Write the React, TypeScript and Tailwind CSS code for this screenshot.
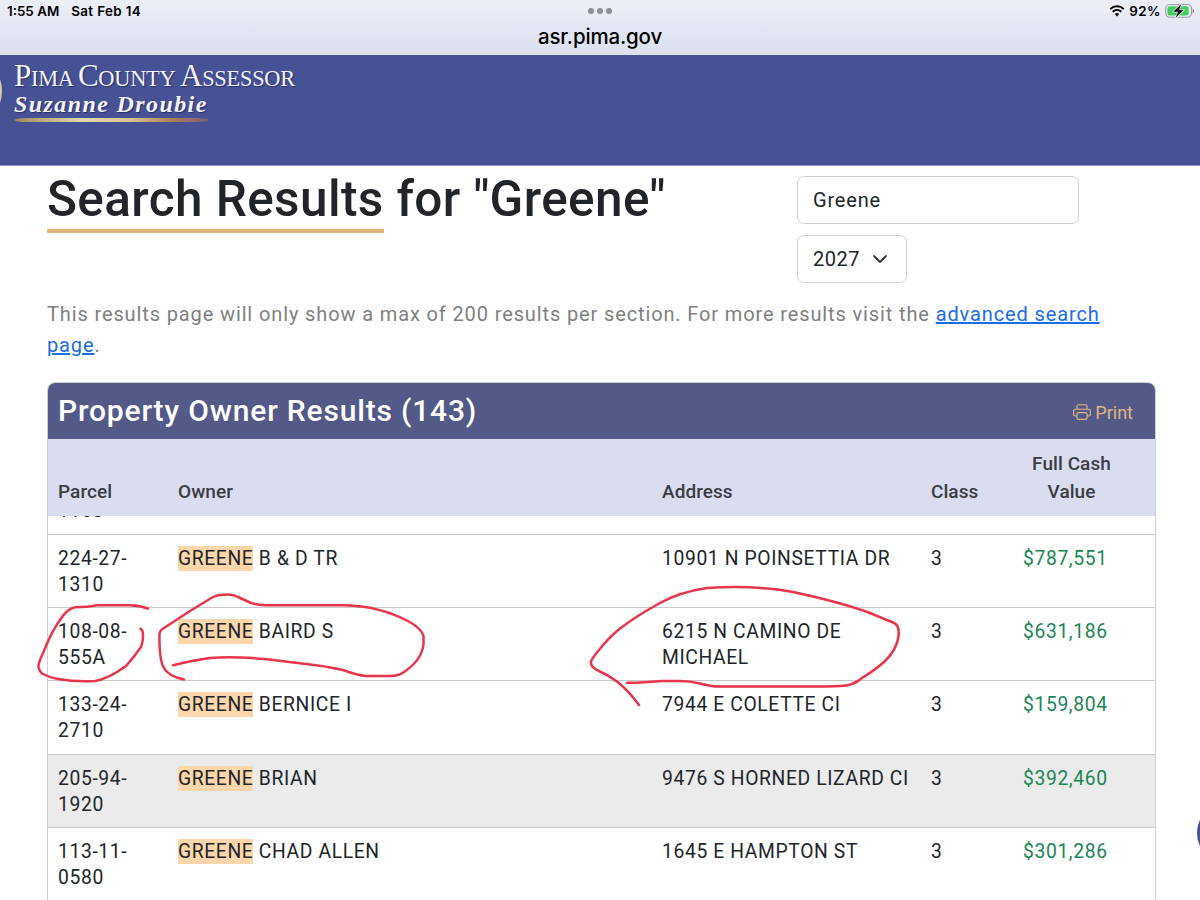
import { FC } from "react";

type OwnerRow = {
  parcel: [string, string];
  owner: string;
  address: string;
  classCode: string;
  value: string;
  shaded?: boolean;
};

const rows: OwnerRow[] = [
  {
    parcel: ["224-27-", "1310"],
    owner: "B & D TR",
    address: "10901 N POINSETTIA DR",
    classCode: "3",
    value: "$787,551",
  },
  {
    parcel: ["108-08-", "555A"],
    owner: "BAIRD S",
    address: "6215 N CAMINO DE MICHAEL",
    classCode: "3",
    value: "$631,186",
  },
  {
    parcel: ["133-24-", "2710"],
    owner: "BERNICE I",
    address: "7944 E COLETTE CI",
    classCode: "3",
    value: "$159,804",
  },
  {
    parcel: ["205-94-", "1920"],
    owner: "BRIAN",
    address: "9476 S HORNED LIZARD CI",
    classCode: "3",
    value: "$392,460",
    shaded: true,
  },
  {
    parcel: ["113-11-", "0580"],
    owner: "CHAD ALLEN",
    address: "1645 E HAMPTON ST",
    classCode: "3",
    value: "$301,286",
  },
];

const WifiIcon: FC = () => (
  <svg width="16" height="12" viewBox="0 0 16 12" fill="none" stroke="#000">
    <path d="M1.2 4.1a9.8 9.8 0 0 1 13.6 0" strokeWidth="2" />
    <path d="M3.7 6.8a6.2 6.2 0 0 1 8.6 0" strokeWidth="1.9" />
    <path d="M8 11.4 5.8 9.1a3.2 3.2 0 0 1 4.4 0z" fill="#000" stroke="none" />
  </svg>
);

const BatteryIcon: FC = () => (
  <svg width="30" height="16" viewBox="0 0 30 16" fill="none">
    <rect x="0.7" y="1.5" width="25.8" height="12.8" rx="4" stroke="#9b9da6" strokeWidth="1.1" />
    <rect x="2.4" y="3.2" width="21.2" height="9.400" rx="2.5" fill="#3fce5f" />
    <path d="M27.6 5.8v4.2c1-.3 1.6-1.1 1.6-2.1s-.6-1.8-1.6-2.1z" fill="#85878f" />
    <path
      d="M16.200 1 8.400 8.700h4.700L10.600 14.800l8.300-8h-4.800z"
      fill="#000"
      stroke="#e6e9f3"
      strokeWidth="1.6"
      paintOrder="stroke"
      strokeLinejoin="round"
    />
  </svg>
);

const PrinterIcon: FC = () => (
  <svg width="18" height="18" viewBox="0 0 16 16" fill="#e0b683">
    <path d="M5 1a2 2 0 0 0-2 2v2H2a2 2 0 0 0-2 2v3a2 2 0 0 0 2 2h1v1a2 2 0 0 0 2 2h6a2 2 0 0 0 2-2v-1h1a2 2 0 0 0 2-2V7a2 2 0 0 0-2-2h-1V3a2 2 0 0 0-2-2zM4 3a1 1 0 0 1 1-1h6a1 1 0 0 1 1 1v2H4zm1 5a2 2 0 0 0-2 2v1H2a1 1 0 0 1-1-1V7a1 1 0 0 1 1-1h12a1 1 0 0 1 1 1v3a1 1 0 0 1-1 1h-1v-1a2 2 0 0 0-2-2zm7 2v3a1 1 0 0 1-1 1H5a1 1 0 0 1-1-1v-3a1 1 0 0 1 1-1h6a1 1 0 0 1 1 1" />
  </svg>
);

// Status bar and address line
const BrowserBar: FC = () => (
  <div className="h-[55px] bg-linear-to-b from-[#eceef7] to-[#dce0ef] font-['Inter',sans-serif] text-black">
    <div className="grid h-[22px] grid-cols-3 items-center">
      <div className="flex gap-3 pl-[7px] text-[13.4px] leading-[22px] font-semibold whitespace-nowrap">
        <span>1:55 AM</span>
        <span className="tracking-[0.35px]">Sat Feb 14</span>
      </div>
      <div className="flex justify-center gap-[3px]">
        <span className="size-1.5 rounded-full bg-[#8b8d97]" />
        <span className="size-1.5 rounded-full bg-[#8b8d97]" />
        <span className="size-1.5 rounded-full bg-[#8b8d97]" />
      </div>
      <div className="flex items-center justify-end pr-[5px]">
        <WifiIcon />
        <span className="mr-1 ml-1 text-[13.4px] font-semibold tracking-[0.5px]">92%</span>
        <BatteryIcon />
      </div>
    </div>
    <div className="text-center text-[20.5px] leading-[30px] font-medium tracking-[-0.15px]">
      asr.pima.gov
    </div>
  </div>
);

const SiteHeader: FC = () => (
  <header className="relative h-[111px] overflow-hidden border-b border-[#8f94cf] bg-[#465196] pl-[14px] text-[#f3f4fb] [text-shadow:1px_1px_1px_rgba(20,25,70,0.6)]">
    <div className="absolute top-[1px] -left-[68px] size-[70px] rounded-full border-2 border-[#d8cf9f] bg-[#465196]" />
    <div className="pt-[6px] font-['Liberation_Serif',serif] text-[22.4px] leading-[30px] tracking-[-0.25px] whitespace-nowrap">
      <span className="text-[31px]">P</span>IMA <span className="text-[31px]">C</span>OUNTY{" "}
      <span className="text-[31px]">A</span>SSESSOR
    </div>
    <div className="-mt-0.5 font-['Liberation_Serif',serif] text-[24px] leading-[24px] font-bold tracking-[1.4px] italic">
      Suzanne Droubie
    </div>
    <svg width="200" height="6" viewBox="0 0 200 6" className="mt-px block">
      <defs>
        <linearGradient id="rule">
          <stop offset="0" stopColor="#a08a5c" />
          <stop offset="0.35" stopColor="#e2d9b0" />
          <stop offset="0.6" stopColor="#d9c48f" />
          <stop offset="0.8" stopColor="#b07f55" />
          <stop offset="1" stopColor="#7d6277" />
        </linearGradient>
      </defs>
      <path d="M0 3Q2 1 14 1H180Q192 1.4 196 3Q192 4.8 180 5H14Q2 5 0 3z" fill="url(#rule)" />
    </svg>
  </header>
);

// Hand drawn circles round the matching record
const Markup: FC = () => (
  <svg
    className="pointer-events-none absolute top-0 left-0"
    width="1200"
    height="900"
    viewBox="0 0 1200 900"
    fill="none"
    stroke="#e8354a"
    strokeWidth="2.5"
    strokeLinecap="round"
    strokeLinejoin="round"
  >
    <path d="M148 608.5Q140 605.5 130 605.2H97Q88 607 75 607.2Q68 608.5 62 617Q52 631 46 646C43 654 38 662 38.500 667Q39 671 42 673.500Q50 678 58 679Q75 682 95 681Q108 679 126 666Q134 657 141 647Q144 639 142.500 631L140.500 628.500" />
    <path d="M184 679.500Q168 676 164 668Q159 660 159.500 634Q160 630 164 628L190 611L213 597Q218 594.500 225 594.700Q233 594 238 597L250 602.500Q256 605 265 605.200H345Q379 606 408 621Q421 628 423.500 636V644Q422 660 404 672Q399 676 390 676H366Q358 675.500 343 670Q325 666 310 664.500L265 659Q230 656 210 658Q195 660 173 665.200" />
    <path d="M639 705Q628 690 617 681.500Q608 675 597 670Q590 666 591 661.500Q593 657 599 650Q610 636 622 627Q638 615 660 603Q680 592 707 588Q755 585 793 592Q840 602 870 613L893 622.500Q900 625 898.500 636Q897 650 884 662Q875 670 862 678Q853 686 840 686Q828 686.500 812 686.500H722Q712 687 700 683.500Q690 681 680 681H662Q640 683 627 682.800" />
  </svg>
);

const App: FC = () => {
  return (
    <div className="relative h-[900px] w-[1200px] overflow-hidden bg-white font-['Roboto',sans-serif] text-[#212529]">
      <BrowserBar />
      <SiteHeader />

      <main className="px-[47px]">
        <div className="flex h-[132px]">
          <h1 className="w-[750px] pt-1 text-[49.5px] leading-[58px] font-medium tracking-[0.4px] whitespace-nowrap">
            <span className="inline-block h-[63px] border-b-4 border-[#dfb47d]">Search Results</span>{" "}
            for "Greene"
          </h1>
          <div className="flex flex-col items-start gap-[11px] pt-[10px] text-[20px]">
            <input
              type="text"
              defaultValue="Greene"
              className="h-[48px] w-[282px] rounded-[7px] border border-[#cfd3d9] pb-px pl-[15px] tracking-[0.8px] outline-none"
            />
            <button className="flex h-[48px] w-[110px] items-center rounded-[7px] border border-[#cfd3d9] pb-px pl-[15px] tracking-[0.5px]">
              2027
              <svg
                width="16"
                height="16"
                viewBox="0 0 16 16"
                className="ml-3"
                fill="none"
                stroke="#343a40"
                strokeWidth="1.9"
                strokeLinecap="round"
                strokeLinejoin="round"
              >
                <path d="m2 5 6 6 6-6" />
              </svg>
            </button>
          </div>
        </div>

        <p className="pt-px text-[20px] leading-[31px] tracking-[0.875px] text-[#808080]">
          This results page will only show a max of 200 results per section. For more results visit the{" "}
          <a href="#" className="text-[#1a6ce8] underline">
            advanced search
            <br />
            page
          </a>
          .
        </p>

        <section className="mt-[21px] h-[530px] w-[1109px] overflow-hidden rounded-t-[8px] border border-[#cfcfd6]">
          <div className="flex h-[56px] items-center justify-between bg-[#535a87] pr-[22px] pl-[10px]">
            <h2 className="pb-0.5 text-[30px] font-medium tracking-[0.82px] text-white">
              Property Owner Results (143)
            </h2>
            <a href="#" className="flex items-center gap-1 pt-0.5 text-[18px] text-[#e0b683]">
              <PrinterIcon />
              Print
            </a>
          </div>

          <table className="w-full table-fixed border-collapse">
            <colgroup>
              <col className="w-[120px]" />
              <col className="w-[484px]" />
              <col className="w-[269px]" />
              <col className="w-[84px]" />
              <col />
            </colgroup>
            <thead>
              <tr className="h-[77px] bg-[#dadcef] text-left align-bottom text-[19px] leading-[28px] tracking-[0.06px] text-[#3b3d45]">
                <th className="pb-[10px] pl-[10px] font-medium">Parcel</th>
                <th className="pb-[10px] pl-[10px] font-medium">Owner</th>
                <th className="pb-[10px] pl-[10px] font-medium">Address</th>
                <th className="pb-[10px] pl-[10px] font-medium">Class</th>
                <th className="pr-[17px] pb-[10px] text-center font-medium">
                  Full Cash
                  <br />
                  Value
                </th>
              </tr>
            </thead>
            <tbody className="text-[19.300px] leading-[26px] tracking-[0.63px]">
              {/* Row scrolled under the sticky head */}
              <tr>
                <td colSpan={5} className="p-0 pl-[10px]">
                  <div className="flex h-[18px] items-start overflow-hidden">
                    <span className="-mt-[18px]">1160</span>
                  </div>
                </td>
              </tr>
              {rows.map((row) => (
                <tr
                  key={row.parcel.join("")}
                  className={
                    row.shaded
                      ? "h-[73.2px] border-t border-[#c6c7c9] bg-[#ebebeb] align-top"
                      : "h-[73.2px] border-t border-[#c6c7c9] align-top"
                  }
                >
                  <td className="pt-[11px] pl-[10px]">
                    {row.parcel[0]}
                    <br />
                    {row.parcel[1]}
                  </td>
                  <td className="pt-[11px] pl-[10px]">
                    <mark className="bg-[#fdd6ac] py-px text-inherit">GREENE</mark> {row.owner}
                  </td>
                  <td className="pt-[11px] pl-[10px]">{row.address}</td>
                  <td className="pt-[11px] pl-[10px]">{row.classCode}</td>
                  <td className="pt-[11px] pl-[18px] text-[#198754]">{row.value}</td>
                </tr>
              ))}
            </tbody>
          </table>
        </section>
      </main>

      <div className="absolute top-[803px] left-[1197px] size-[60px] rounded-full bg-[#465196]" />
      <Markup />
    </div>
  );
};

export default App;
